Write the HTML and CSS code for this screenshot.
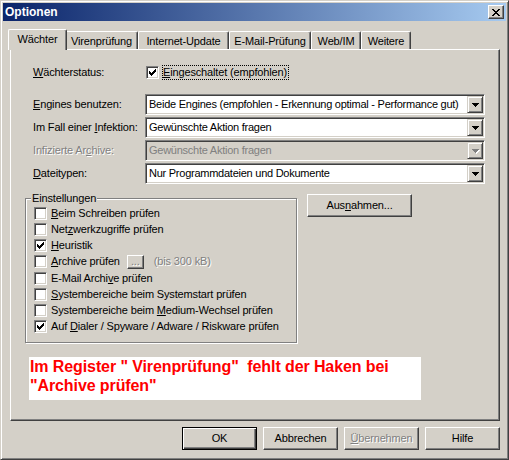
FILE: index.html
```html
<!DOCTYPE html>
<html lang="de">

<head>
    <meta charset="UTF-8">
    <title>Optionen</title>
    <link rel="stylesheet" href="styles.css">
</head>

<body>
    <svg class="defs" width="0" height="0">
        <symbol id="tick" viewBox="0 0 7 7">
            <path d="M6 0h1v1h-1z M5 1h2v1h-2z M0 2h1v1h-1z M4 2h3v1h-3z M0 3h2v1h-2z M3 3h3v1h-3z M0 4h5v1h-5z M1 5h3v1h-3z M2 6h1v1h-1z"/>
        </symbol>
        <symbol id="arrow" viewBox="0 0 7 4">
            <path d="M0 0h7v1h-1v1h-1v1h-1v1h-1v-1h-1v-1h-1v-1h-1z"/>
        </symbol>
    </svg>

    <div class="window">
        <div class="titlebar">
            <span class="title">Optionen</span>
            <span class="close">
                <svg width="8" height="7" viewBox="0 0 8 7"><path d="M0 0h2v1H0z M6 0h2v1H6z M1 1h2v1H1z M5 1h2v1H5z M2 2h4v1H2z M3 3h2v1H3z M2 4h4v1H2z M1 5h2v1H1z M5 5h2v1H5z M0 6h2v1H0z M6 6h2v1H6z"/></svg>
            </span>
        </div>

        <div class="tabs">
            <div class="tab active tab-waechter">Wächter</div>
            <div class="tab tab-viren">Virenprüfung</div>
            <div class="tab tab-update">Internet-Update</div>
            <div class="tab tab-mail">E-Mail-Prüfung</div>
            <div class="tab tab-web">Web/IM</div>
            <div class="tab tab-weitere">Weitere</div>
        </div>

        <div class="panel">
            <div class="status">
                <span class="status-label"><u>W</u>ächterstatus:</span>
                <span class="check"><svg><use href="#tick"/></svg></span>
                <span class="focus"><u>E</u>ingeschaltet (empfohlen)</span>
            </div>

            <div class="form">
                <span><u>E</u>ngines benutzen:</span>
                <div class="combo">
                    <span class="combo-text">Beide Engines (empfohlen - Erkennung optimal - Performance gut)</span>
                    <span class="drop"><svg><use href="#arrow"/></svg></span>
                </div>

                <span>Im Fall einer <u>I</u>nfektion:</span>
                <div class="combo">
                    <span class="combo-text">Gewünschte Aktion fragen</span>
                    <span class="drop"><svg><use href="#arrow"/></svg></span>
                </div>

                <span class="disabled">Infizierte Ar<u>c</u>hive:</span>
                <div class="combo combo-off">
                    <span class="combo-text">Gewünschte Aktion fragen</span>
                    <span class="drop"><svg><use href="#arrow"/></svg></span>
                </div>

                <span><u>D</u>ateitypen:</span>
                <div class="combo">
                    <span class="combo-text">Nur Programmdateien und Dokumente</span>
                    <span class="drop"><svg><use href="#arrow"/></svg></span>
                </div>
            </div>

            <div class="middle">
                <fieldset class="group">
                    <legend>Einstellungen</legend>
                    <div class="opt"><span class="check"></span><span><u>B</u>eim Schreiben prüfen</span></div>
                    <div class="opt"><span class="check"></span><span>Net<u>z</u>werkzugriffe prüfen</span></div>
                    <div class="opt"><span class="check"><svg><use href="#tick"/></svg></span><span><u>H</u>euristik</span></div>
                    <div class="opt">
                        <span class="check"></span><span><u>A</u>rchive prüfen</span>
                        <span class="mini disabled">...</span>
                        <span class="disabled">(bis 300 kB)</span>
                    </div>
                    <div class="opt"><span class="check"></span><span>E-Mail Archi<u>v</u>e prüfen</span></div>
                    <div class="opt"><span class="check"></span><span><u>S</u>ystembereiche beim Systemstart prüfen</span></div>
                    <div class="opt"><span class="check"></span><span>Systembereiche beim <u>M</u>edium-Wechsel prüfen</span></div>
                    <div class="opt"><span class="check"><svg><use href="#tick"/></svg></span><span>Auf <u>D</u>ialer / Spyware / Adware / Riskware prüfen</span></div>
                </fieldset>

                <div class="btn btn-except">Aus<u>n</u>ahmen...</div>
            </div>

            <div class="note">Im Register " Virenprüfung" &nbsp;fehlt der Haken bei<br>"Archive prüfen"</div>
        </div>

        <div class="buttons">
            <div class="btn default">OK</div>
            <div class="btn">Abbrechen</div>
            <div class="btn disabled"><u>Ü</u>bernehmen</div>
            <div class="btn">Hilfe</div>
        </div>
    </div>
</body>

</html>
```

FILE: styles.css
```css
body {
    margin: 0;
    background: #d4d0c8;
    font-family: "Liberation Sans", Arial, sans-serif;
    font-size: 11px;
    line-height: 13px;
    letter-spacing: -0.15px;
    color: #000;
}

.defs {
    display: block;
    width: 0;
    height: 0;
}

svg {
    shape-rendering: crispEdges;
}

u {
    text-decoration-thickness: 1px;
    text-underline-offset: 1px;
}

.window {
    width: 509px;
    height: 460px;
    box-sizing: border-box;
    border: 1px solid;
    border-color: #d4d0c8 #404040 #404040 #d4d0c8;
    box-shadow: inset 1px 1px #fff, inset -1px -1px #808080;
    padding: 2px;
}

/* title bar */

.titlebar {
    height: 18px;
    display: flex;
    align-items: center;
    padding: 0 2px;
    background: linear-gradient(to right, #0a246a, #a6caf0);
}

.title {
    color: #fff;
    font-weight: bold;
    font-size: 12px;
    letter-spacing: 0;
}

.close {
    margin-left: auto;
    width: 16px;
    height: 14px;
    box-sizing: border-box;
    display: flex;
    align-items: center;
    justify-content: center;
    background: #d4d0c8;
    border: 1px solid;
    border-color: #fff #404040 #404040 #fff;
    box-shadow: inset -1px -1px #808080;
}

/* tabs */

.tabs {
    display: flex;
    align-items: flex-end;
    height: 20px;
    margin: 8px 0 0 7px;
}

.tab {
    height: 18px;
    box-sizing: border-box;
    border: 1px solid;
    border-bottom: 0;
    border-color: #fff #404040 #404040 #fff;
    border-radius: 2px 2px 0 0;
    box-shadow: inset -1px 0 #808080;
    padding-top: 3px;
    text-align: center;
}

.tab-waechter { width: 55px; }
.tab-viren { width: 73px; }
.tab-update { width: 91px; }
.tab-mail { width: 82px; }
.tab-web { width: 50px; }
.tab-weitere { width: 50px; }

.tab.active {
    position: relative;
    z-index: 1;
    height: 21px;
    width: 59px;
    margin: 0 -2px -1px;
    background: #d4d0c8;
}

/* panel */

.panel {
    margin-left: 7px;
    width: 490px;
    height: 372px;
    box-sizing: border-box;
    border: 1px solid;
    border-color: #fff #404040 #404040 #fff;
    box-shadow: inset -1px -1px #808080;
    padding: 16px 14px 0;
}

.status {
    display: flex;
    align-items: center;
    height: 13px;
    margin-left: 8px;
}

.status-label {
    width: 113px;
}

.focus {
    margin-left: 3px;
    border: 1px dotted #000;
    padding: 0 1px 0 0;
}

.check {
    width: 13px;
    height: 13px;
    flex: none;
    box-sizing: border-box;
    display: flex;
    align-items: center;
    justify-content: center;
    background: #fff;
    border: 1px solid;
    border-color: #808080 #fff #fff #808080;
    box-shadow: inset 1px 1px #404040, inset -1px -1px #d4d0c8;
}

.check svg {
    width: 7px;
    height: 7px;
}

.form {
    display: grid;
    grid-template-columns: 112px 340px;
    row-gap: 2px;
    align-items: center;
    margin: 15px 0 0 8px;
}

.combo {
    height: 21px;
    box-sizing: border-box;
    display: flex;
    align-items: center;
    padding: 1px;
    background: #fff;
    border: 1px solid;
    border-color: #808080 #fff #fff #808080;
    box-shadow: inset 1px 1px #404040, inset -1px -1px #d4d0c8;
}

.combo-text {
    flex: 1;
    padding-left: 2px;
    letter-spacing: -0.25px;
    white-space: nowrap;
    overflow: hidden;
}

.drop {
    width: 16px;
    height: 17px;
    box-sizing: border-box;
    display: flex;
    align-items: center;
    justify-content: center;
    background: #d4d0c8;
    border: 1px solid;
    border-color: #d4d0c8 #404040 #404040 #d4d0c8;
    box-shadow: inset 1px 1px #fff, inset -1px -1px #808080;
}

.drop svg {
    width: 7px;
    height: 4px;
}

.combo-off {
    background: #d4d0c8;
}

.combo-off .combo-text {
    color: #808080;
}

.combo-off .drop svg {
    fill: #808080;
    filter: drop-shadow(1px 1px 0 #fff);
}

.disabled {
    color: #808080;
    text-shadow: 1px 1px 0 #fff;
}

/* group box */

.middle {
    display: flex;
    align-items: flex-start;
    margin-top: 8px;
}

.group {
    width: 272px;
    box-sizing: border-box;
    margin: 0;
    padding: 0 8px 7px;
    min-width: 0;
    border: 1px solid #808080;
    box-shadow: 1px 1px #fff, inset 1px 1px #fff;
}

.group legend {
    margin-left: -3px;
    padding: 0 1px;
    line-height: 13px;
    background: #d4d0c8;
}

.opt {
    display: flex;
    align-items: center;
    height: 16.25px;
    white-space: nowrap;
}

.opt .check {
    margin-right: 4px;
}

.mini {
    width: 17px;
    height: 14px;
    box-sizing: border-box;
    margin: 0 10px 0 7px;
    display: flex;
    justify-content: center;
    line-height: 10px;
    border: 1px solid;
    border-color: #fff #404040 #404040 #fff;
    box-shadow: inset -1px -1px #808080;
}

/* buttons */

.btn {
    width: 75px;
    height: 23px;
    box-sizing: border-box;
    display: flex;
    align-items: center;
    justify-content: center;
    border: 1px solid;
    border-color: #fff #404040 #404040 #fff;
    box-shadow: inset -1px -1px #808080;
}

.btn.default {
    border-color: #000;
    box-shadow: inset 1px 1px #fff, inset -1px -1px #404040, inset -2px -2px #808080;
}

.btn-except {
    width: 105px;
    margin: 2px 0 0 10px;
}

.note {
    width: 392px;
    height: 43px;
    box-sizing: border-box;
    margin: 14px 0 0 4px;
    padding-left: 1px;
    background: #fff;
    color: #f00;
    font-size: 16px;
    font-weight: bold;
    line-height: 19px;
    letter-spacing: -0.1px;
}

.buttons {
    display: flex;
    justify-content: flex-end;
    gap: 6px;
    width: 490px;
    margin: 6px 0 0 7px;
}
```
